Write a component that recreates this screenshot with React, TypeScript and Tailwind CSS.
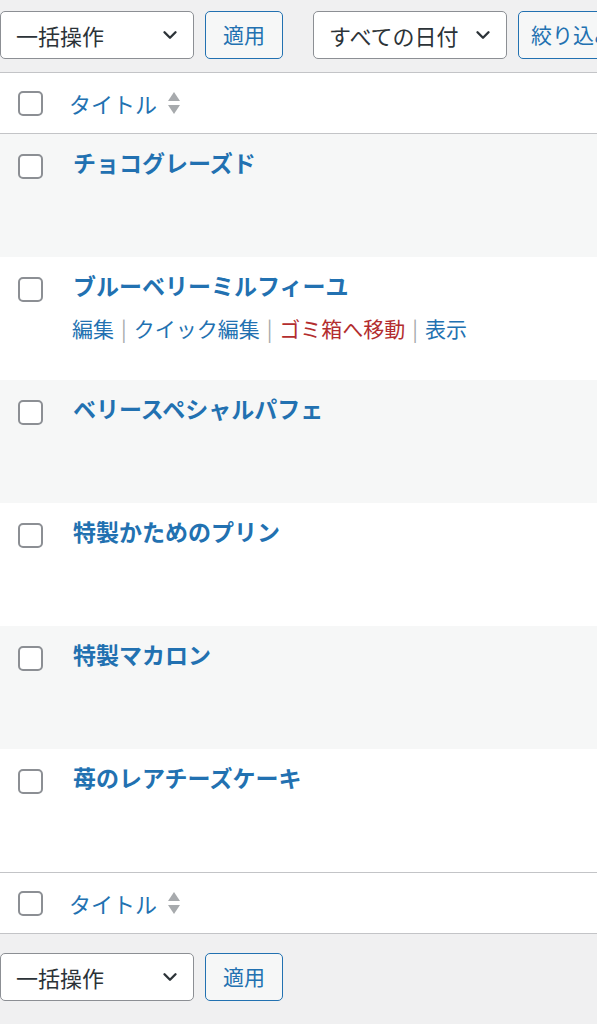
import { ChevronDown } from "lucide-react";

const rows = [
  "チョコグレーズド",
  "ブルーベリーミルフィーユ",
  "ベリースペシャルパフェ",
  "特製かためのプリン",
  "特製マカロン",
  "苺のレアチーズケーキ",
];

function Checkbox() {
  return (
    <span className="block w-[25px] h-[25px] shrink-0 rounded-[5px] border-2 border-[#8c8f94] bg-white" />
  );
}

function SortArrows() {
  return (
    <svg width="14" height="24" viewBox="0 0 14 24" className="ml-[10px]">
      <path d="M7 1 L13 10 L1 10 Z" fill="#a7aaad" />
      <path d="M1 14 L13 14 L7 23 Z" fill="#a7aaad" />
    </svg>
  );
}

function Select({ label, width }: { label: string; width: string }) {
  return (
    <div
      className={`${width} h-[48px] shrink-0 flex items-center justify-between pl-[15px] pr-[12px] bg-white border border-[#8c8f94] rounded-[5px] text-[22px] text-[#2c3338]`}
    >
      <span>{label}</span>
      <ChevronDown size={22} strokeWidth={2.6} className="text-[#2c3338]" />
    </div>
  );
}

function Button({ label, width }: { label: string; width: string }) {
  return (
    <div
      className={`${width} h-[48px] shrink-0 flex items-center justify-center bg-[#f6f7f7] border border-[#2271b1] rounded-[5px] text-[21px] text-[#2271b1]`}
    >
      {label}
    </div>
  );
}

function HeaderRow() {
  return (
    <div className="h-[60px] flex items-center pl-[18px] bg-white">
      <Checkbox />
      <span className="ml-[26px] text-[22px] text-[#2271b1]">タイトル</span>
      <SortArrows />
    </div>
  );
}

export default function App() {
  return (
    <div
      className="w-[597px] h-[1024px] overflow-hidden bg-[#f0f0f1]"
      style={{ fontFamily: '"Noto Sans CJK JP", "Noto Sans", sans-serif' }}
    >
      <div className="h-[72px] flex items-start pt-[11px] gap-[11px] whitespace-nowrap overflow-hidden">
        <Select label="一括操作" width="w-[194px]" />
        <Button label="適用" width="w-[78px]" />
        <div className="ml-[19px] shrink-0">
          <Select label="すべての日付" width="w-[194px]" />
        </div>
        <Button label="絞り込み" width="w-[110px]" />
      </div>

      <div className="border-y border-[#c3c4c7]">
        <HeaderRow />
        <div className="border-t border-[#c3c4c7]">
          {rows.map((title, i) => (
            <div
              key={title}
              className={`h-[123px] flex items-start pl-[18px] pt-[20px] ${
                i % 2 === 0 ? "bg-[#f6f7f7]" : "bg-white"
              }`}
            >
              <Checkbox />
              <div className="ml-[30px] -mt-[9px]">
                <div className="text-[23px] leading-[34px] font-bold text-[#2271b1]">
                  {title}
                </div>
                {i === 1 && (
                  <div className="mt-[12px] text-[21px] leading-[28px] text-[#2271b1] -ml-[1px]">
                    編集
                    <span className="text-[#a7aaad] mx-[7px]">|</span>
                    クイック編集
                    <span className="text-[#a7aaad] mx-[7px]">|</span>
                    <span className="text-[#b32d2e]">ゴミ箱へ移動</span>
                    <span className="text-[#a7aaad] mx-[7px]">|</span>
                    表示
                  </div>
                )}
              </div>
            </div>
          ))}
        </div>
        <div className="border-t border-[#c3c4c7]">
          <HeaderRow />
        </div>
      </div>

      <div className="flex items-start pt-[19px] gap-[11px]">
        <Select label="一括操作" width="w-[194px]" />
        <Button label="適用" width="w-[78px]" />
      </div>
    </div>
  );
}
